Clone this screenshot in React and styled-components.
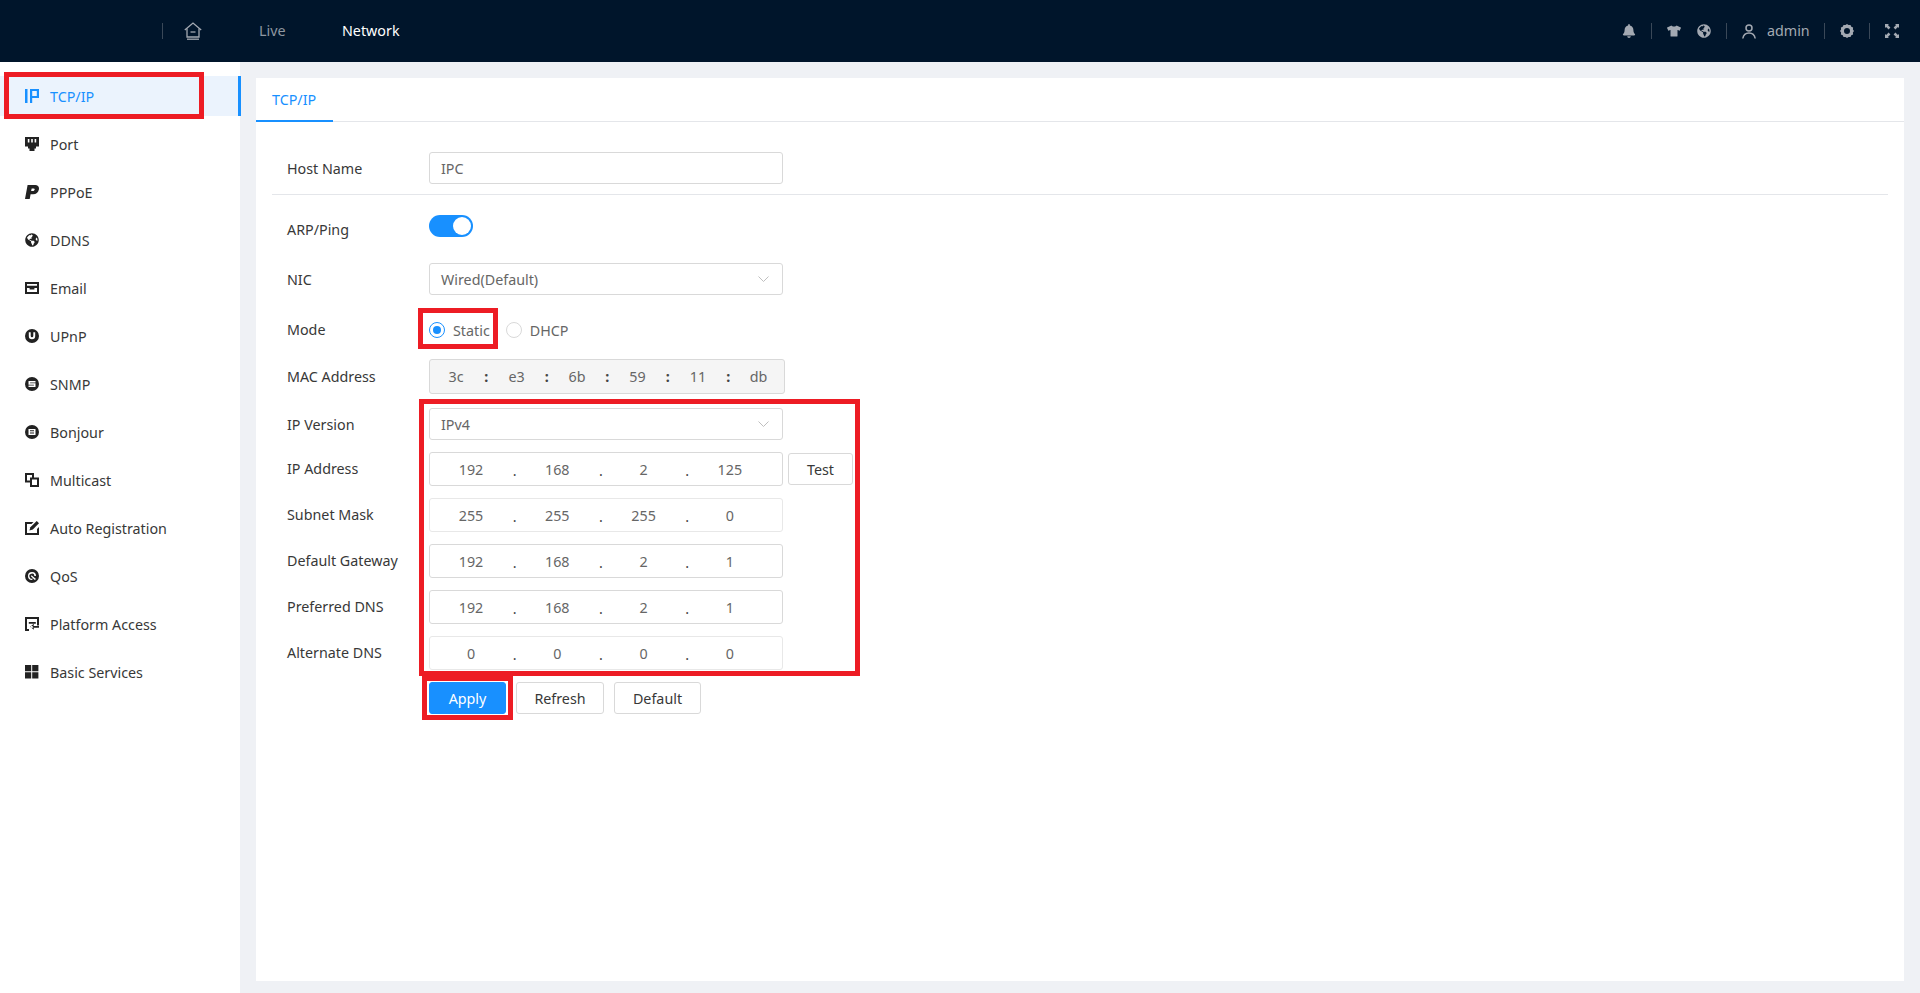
import React from "react";
import styled, { createGlobalStyle } from "styled-components";
import { FaBell, FaTshirt, FaGlobeAmericas } from "react-icons/fa";

const GlobalStyle = createGlobalStyle`
  html, body {
    margin: 0;
    padding: 0;
    background: #eff1f5;
    font-family: "Noto Sans", "Liberation Sans", sans-serif;
    font-size: 14.3px;
    color: #383838;
  }
`;

const Page = styled.div`
  position: relative;
  width: 1920px;
  height: 993px;
  overflow: hidden;
`;

const Header = styled.header`
  display: flex;
  align-items: center;
  height: 62px;
  padding-left: 162px;
  padding-right: 21px;
  background: #00152b;
  color: #a3a9b2;
`;

const Divider = styled.span`
  width: 1px;
  height: 16px;
  background: #3a4858;
  margin: ${(p) => p.$margin || "0"};
`;

const HomeLink = styled.span`
  display: flex;
  margin: 0 57px 0 21px;
  color: #a3a9b2;
`;

const NavLink = styled.span`
  width: 83px;
  line-height: 20px;
  color: ${(p) => (p.$active ? "#fff" : "#8f97a1")};
`;

const HeaderRight = styled.div`
  display: flex;
  align-items: center;
  margin-left: auto;
`;

const HeaderIcon = styled.span`
  display: flex;
  width: 14px;
  justify-content: center;
  margin: ${(p) => p.$margin || "0"};
  font-size: 14px;
`;

const UserName = styled.span`
  width: 42px;
  margin-left: 11px;
  line-height: 20px;
  color: #a3a9b2;
`;

const Body = styled.div`
  display: flex;
  height: 931px;
`;

const Sidebar = styled.aside`
  width: 240px;
  padding-top: 14px;
  box-sizing: border-box;
  background: #fff;
  display: flex;
  flex-direction: column;
  gap: 8px;
`;

const MenuItem = styled.div`
  display: flex;
  align-items: center;
  height: 40px;
  padding-left: 25px;
  gap: 11px;
  color: ${(p) => (p.$active ? "#1890ff" : "#383838")};
  background: ${(p) => (p.$active ? "#ebf3fd" : "transparent")};
  border-right: ${(p) => (p.$active ? "3px solid #1890ff" : "none")};
  margin-right: ${(p) => (p.$active ? "-1px" : "0")};
  svg {
    width: 14px;
    height: 14px;
    flex: none;
    color: ${(p) => (p.$active ? "#1890ff" : "#222")};
  }
`;

const Main = styled.main`
  flex: 1;
  padding: 16px 16px 12px;
  display: flex;
`;

const Card = styled.section`
  flex: 1;
  background: #fff;
`;

const TabBar = styled.div`
  display: flex;
  height: 44px;
  box-sizing: border-box;
  border-bottom: 1px solid #e4e6ea;
`;

const Tab = styled.div`
  width: 77px;
  height: 44px;
  box-sizing: border-box;
  padding: 12px 0 0 16px;
  line-height: 20px;
  color: #1890ff;
  border-bottom: 2px solid #1890ff;
`;

const Form = styled.form`
  padding: 30px 16px 0;
  display: flex;
  flex-direction: column;
`;

const Row = styled.div`
  display: flex;
  align-items: ${(p) => p.$align || "center"};
  height: ${(p) => p.$h || 32}px;
  margin-top: ${(p) => p.$mt || 0}px;
  padding-left: 15px;
`;

const Label = styled.label`
  width: 142px;
  flex: none;
  padding-top: ${(p) => p.$pt || 0}px;
  color: #383838;
  line-height: ${(p) => p.$lh || "20px"};
`;

const Rule = styled.hr`
  height: 1px;
  margin: 10px 0 0;
  border: 0;
  background: #e4e6ea;
`;

const Field = styled.div`
  display: flex;
  align-items: center;
  box-sizing: border-box;
  width: ${(p) => p.$w || 354}px;
  height: 100%;
  padding: 0 11px;
  border: 1px solid #d9d9d9;
  border-radius: 3px;
  color: #666;
  background: #fff;
`;

const Chevron = styled.svg`
  width: 11px;
  height: 6px;
  margin-left: auto;
  margin-right: 2px;
  fill: none;
  stroke: #bfbfbf;
`;

const Switch = styled.span`
  display: flex;
  justify-content: flex-end;
  align-items: center;
  width: 44px;
  height: 22px;
  margin-top: 1px;
  padding: 0 2px;
  box-sizing: border-box;
  border-radius: 11px;
  background: #1890ff;
  &::after {
    content: "";
    width: 18px;
    height: 18px;
    border-radius: 50%;
    background: #fff;
  }
`;

const RadioOption = styled.span`
  display: flex;
  align-items: center;
  gap: 8px;
  margin-right: 16px;
  color: #666;
`;

const RadioDot = styled.span`
  display: flex;
  align-items: center;
  justify-content: center;
  width: 16px;
  height: 16px;
  box-sizing: border-box;
  border-radius: 50%;
  border: 1px solid ${(p) => (p.$on ? "#1890ff" : "#d9d9d9")};
  &::after {
    content: "";
    width: 8px;
    height: 8px;
    border-radius: 50%;
    background: ${(p) => (p.$on ? "#1890ff" : "transparent")};
  }
`;

const MacField = styled(Field)`
  width: 356px;
  padding: 0 0 0 5px;
  background: #f5f5f5;
  color: #666;
`;

const MacPart = styled.span`
  width: 42px;
  text-align: center;
`;

const MacSep = styled.span`
  width: 18.5px;
  text-align: center;
  font-weight: 700;
  color: #444;
`;

const IpField = styled(Field)`
  padding: 0 0 0 6px;
  border-color: ${(p) => (p.$light ? "#e8e8e8" : "#d9d9d9")};
`;

const IpPart = styled.span`
  width: 70px;
  text-align: center;
`;

const IpDot = styled.span`
  width: 16.3px;
  text-align: center;
  padding: 3px 0 0 1px;
  box-sizing: border-box;
  color: #444;
`;

const Button = styled.button`
  height: 32px;
  width: ${(p) => p.$w}px;
  margin-left: ${(p) => p.$ml || 0}px;
  padding: 0;
  border-radius: 3px;
  border: 1px solid ${(p) => (p.$primary ? "#1890ff" : "#d9d9d9")};
  background: ${(p) => (p.$primary ? "#1890ff" : "#fff")};
  color: ${(p) => (p.$primary ? "#fff" : "#383838")};
  font: inherit;
`;

const Mark = styled.div`
  position: absolute;
  left: ${(p) => p.$x}px;
  top: ${(p) => p.$y}px;
  width: ${(p) => p.$w}px;
  height: ${(p) => p.$h}px;
  box-sizing: border-box;
  border: 5px solid #ed1c24;
  pointer-events: none;
`;

const Icon = ({ children }) => (
  <svg viewBox="0 0 14 14" fill="currentColor">
    {children}
  </svg>
);

const menu = [
  {
    name: "TCP/IP",
    icon: (
      <Icon>
        <path d="M0 0h2.5v14H0zM5 0h9v9H7.2v5H5zM7.2 2v5H11.8V2z" fillRule="evenodd" />
      </Icon>
    ),
  },
  {
    name: "Port",
    icon: (
      <Icon>
        <path
          d="M0 0h14v9.5h-3v2H9.5V14h-5v-2.5H3v-2H0zM2.8 2v3.4h1.6V2zM6.2 2v3.4h1.6V2zM9.6 2v3.4h1.6V2z"
          fillRule="evenodd"
        />
      </Icon>
    ),
  },
  {
    name: "PPPoE",
    icon: (
      <Icon>
        <path
          d="M2.6 0h7.6C13 0 14.4 1.8 13.9 4.4 13.3 7.5 11.2 9.3 8.2 9.3H5.6L4.7 14H0zM6.7 3.4l-.6 2.7h1.8c1 0 1.6-.6 1.8-1.5.1-.8-.3-1.2-1.1-1.2z"
          fillRule="evenodd"
        />
      </Icon>
    ),
  },
  { name: "DDNS", icon: <FaGlobeAmericas /> },
  {
    name: "Email",
    icon: (
      <Icon>
        <path
          d="M0 1h14v12H0zM2 3v1.8h10V3zM2 7v4h10V7h-2.6v1.6H4.6V7z"
          fillRule="evenodd"
        />
      </Icon>
    ),
  },
  {
    name: "UPnP",
    icon: (
      <Icon>
        <path
          d="M7 0a7 7 0 1 1 0 14A7 7 0 0 1 7 0zM3.8 3.2V7a3.2 3.2 0 0 0 6.4 0V3.2H8.3V7a1.3 1.3 0 0 1-2.6 0V3.2z"
          fillRule="evenodd"
        />
      </Icon>
    ),
  },
  {
    name: "SNMP",
    icon: (
      <Icon>
        <path
          d="M7 0a7 7 0 1 1 0 14A7 7 0 0 1 7 0zM3.5 4v3.8h5.4v.8H3.5V10h7V6.2H5.1v-.8h5.4V4z"
          fillRule="evenodd"
        />
      </Icon>
    ),
  },
  {
    name: "Bonjour",
    icon: (
      <Icon>
        <path
          d="M7 0a7 7 0 1 1 0 14A7 7 0 0 1 7 0zM3.5 4v6h7V4zM5 5.3h4v1H5zM5 7.6h4v1H5z"
          fillRule="evenodd"
        />
      </Icon>
    ),
  },
  {
    name: "Multicast",
    icon: (
      <Icon>
        <path
          d="M0 0h9v4.5h5V14H5V9.5H0zM2 2v5.5h3v-3h2V2zM7 6.5V12h5V6.5z"
          fillRule="evenodd"
        />
      </Icon>
    ),
  },
  {
    name: "Auto Registration",
    icon: (
      <Icon>
        <path d="M0 1h8.5L6.5 3H2v9h10V8l2-2v8H0z" />
        <path d="M11.7 0L14 2.3 7.8 8.6 4.4 9.6l1-3.4z" />
      </Icon>
    ),
  },
  {
    name: "QoS",
    icon: (
      <Icon>
        <path
          d="M7 0a7 7 0 1 1 0 14A7 7 0 0 1 7 0zM7 3a4 4 0 0 0 0 8l1-1.6A2.5 2.5 0 1 1 9.4 7l1.6 0A4 4 0 0 0 7 3zM6.5 6.3L11 10l-1.2 1-3.9-3.7z"
          fillRule="evenodd"
        />
      </Icon>
    ),
  },
  {
    name: "Platform Access",
    icon: (
      <Icon>
        <path d="M0 0h14v8.5h-2V2H2v10h2v2H0z" />
        <path d="M3.8 5h7v1.7h-7zM6 9h8v1.7H6zM8.8 6.8l-3.6 3 3.6 3V11l-1.4-1.2 1.4-1.2z" />
      </Icon>
    ),
  },
  {
    name: "Basic Services",
    icon: (
      <Icon>
        <path d="M0 0h6.2v6.2H0zM7.2 0h6.2v6.2H7.2zM0 7.2h6.2v6.2H0zM7.2 7.2h6.2v6.2H7.2z" />
      </Icon>
    ),
  },
];

const ipRows = [
  { label: "Subnet Mask", value: ["255", "255", "255", "0"], light: true },
  { label: "Default Gateway", value: ["192", "168", "2", "1"] },
  { label: "Preferred DNS", value: ["192", "168", "2", "1"] },
  { label: "Alternate DNS", value: ["0", "0", "0", "0"], light: true },
];

const mac = ["3c", "e3", "6b", "59", "11", "db"];

const IpInput = ({ value, light }) => (
  <IpField $light={light}>
    {value.map((part, i) => (
      <React.Fragment key={i}>
        <IpPart>{part}</IpPart>
        {i < 3 && <IpDot>.</IpDot>}
      </React.Fragment>
    ))}
  </IpField>
);

const SelectArrow = () => (
  <Chevron viewBox="0 0 11 6">
    <path d="M.5.5L5.5 5.5 10.5.5" />
  </Chevron>
);

export default function App() {
  return (
    <Page>
      <GlobalStyle />
      <Header>
        <Divider />
        <HomeLink>
          <svg width="18" height="18" viewBox="0 0 18 18" fill="none" stroke="currentColor" strokeWidth="1.3">
            <path d="M.8 8L9 1l8.2 7" />
            <path d="M3 6.5V15h12V6.5" />
            <path d="M6.5 10h5" />
            <path d="M3 17.2h12" />
          </svg>
        </HomeLink>
        <NavLink>Live</NavLink>
        <NavLink $active>Network</NavLink>
        <HeaderRight>
          <HeaderIcon>
            <FaBell />
          </HeaderIcon>
          <Divider $margin="0 15px" />
          <HeaderIcon>
            <FaTshirt />
          </HeaderIcon>
          <HeaderIcon $margin="0 0 0 16px">
            <FaGlobeAmericas />
          </HeaderIcon>
          <Divider $margin="0 15px" />
          <HeaderIcon>
            <svg width="14" height="15" viewBox="0 0 14 15" fill="none" stroke="currentColor" strokeWidth="1.5">
              <circle cx="7" cy="4" r="3" />
              <path d="M.8 14.5C1.4 10.8 3.8 9 7 9s5.6 1.8 6.2 5.5" />
            </svg>
          </HeaderIcon>
          <UserName>admin</UserName>
          <Divider $margin="0 15px" />
          <HeaderIcon>
            <svg width="14" height="14" viewBox="0 0 14 14" fill="currentColor">
              <path
                d="M7 0l1.5 1.1 2-.2.8 1.8 1.8.8-.2 2L14 7l-1.1 1.5.2 2-1.8.8-.8 1.8-2-.2L7 14l-1.5-1.1-2 .2-.8-1.8-1.8-.8.2-2L0 7l1.1-1.5-.2-2 1.8-.8.8-1.8 2 .2zM7 4a3 3 0 1 0 0 6 3 3 0 0 0 0-6z"
                fillRule="evenodd"
              />
            </svg>
          </HeaderIcon>
          <Divider $margin="0 15px" />
          <HeaderIcon>
            <svg width="14" height="14" viewBox="0 0 14 14" fill="currentColor">
              <path d="M0 0h4L2.9 1.1l2.5 2.5-1.8 1.8L1.1 2.9 0 4zM14 0v4l-1.1-1.1-2.5 2.5-1.8-1.8 2.5-2.5L10 0zM0 14v-4l1.1 1.1 2.5-2.5 1.8 1.8-2.5 2.5L4 14zM14 14h-4l1.1-1.1-2.5-2.5 1.8-1.8 2.5 2.5L14 10z" />
            </svg>
          </HeaderIcon>
        </HeaderRight>
      </Header>
      <Body>
        <Sidebar>
          {menu.map((item, i) => (
            <MenuItem key={item.name} $active={i === 0}>
              {item.icon}
              <span>{item.name}</span>
            </MenuItem>
          ))}
        </Sidebar>
        <Main>
          <Card>
            <TabBar>
              <Tab>TCP/IP</Tab>
            </TabBar>
            <Form>
              <Row>
                <Label $pt={1}>Host Name</Label>
                <Field>IPC</Field>
              </Row>
              <Rule />
              <Row $mt={19} $align="flex-start">
                <Label $lh="32px">ARP/Ping</Label>
                <Switch />
              </Row>
              <Row $mt={17}>
                <Label $pt={1}>NIC</Label>
                <Field>
                  Wired(Default)
                  <SelectArrow />
                </Field>
              </Row>
              <Row $mt={19}>
                <Label>Mode</Label>
                <RadioOption>
                  <RadioDot $on />
                  Static
                </RadioOption>
                <RadioOption>
                  <RadioDot />
                  DHCP
                </RadioOption>
              </Row>
              <Row $mt={13} $h={35}>
                <Label>MAC Address</Label>
                <MacField>
                  {mac.map((part, i) => (
                    <React.Fragment key={part}>
                      <MacPart>{part}</MacPart>
                      {i < 5 && <MacSep>:</MacSep>}
                    </React.Fragment>
                  ))}
                </MacField>
              </Row>
              <Row $mt={14}>
                <Label $pt={1}>IP Version</Label>
                <Field>
                  IPv4
                  <SelectArrow />
                </Field>
              </Row>
              <Row $mt={12} $h={34}>
                <Label>IP Address</Label>
                <IpInput value={["192", "168", "2", "125"]} />
                <Button type="button" $w={65} $ml={5}>
                  Test
                </Button>
              </Row>
              {ipRows.map((row) => (
                <Row key={row.label} $mt={12} $h={34}>
                  <Label>{row.label}</Label>
                  <IpInput value={row.value} light={row.light} />
                </Row>
              ))}
              <Row $mt={12}>
                <Label />
                <Button type="button" $primary $w={77}>
                  Apply
                </Button>
                <Button type="button" $w={88} $ml={10}>
                  Refresh
                </Button>
                <Button type="button" $w={87} $ml={10}>
                  Default
                </Button>
              </Row>
            </Form>
          </Card>
        </Main>
      </Body>
      <Mark $x={4} $y={72} $w={200} $h={47} />
      <Mark $x={418} $y={308} $w={80} $h={41} />
      <Mark $x={419} $y={399} $w={441} $h={277} />
      <Mark $x={422} $y={676} $w={91} $h={44} />
    </Page>
  );
}
